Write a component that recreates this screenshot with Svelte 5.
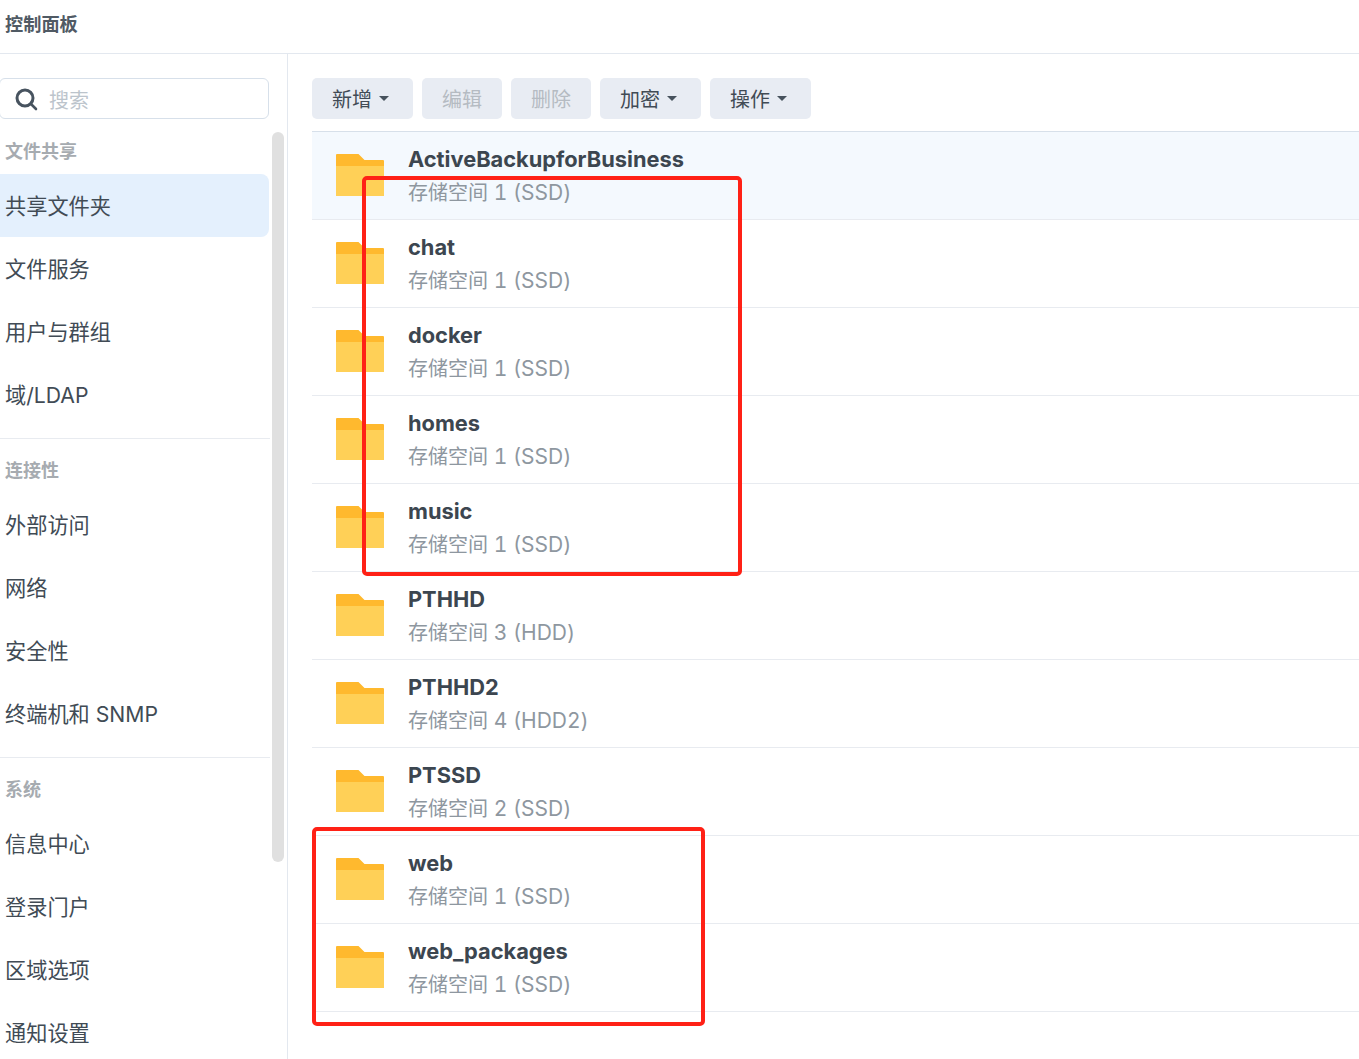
<script>
  const nav = [
    { title: '文件共享', items: ['共享文件夹', '文件服务', '用户与群组', '域/LDAP'] },
    { title: '连接性', items: ['外部访问', '网络', '安全性', '终端机和 SNMP'] },
    { title: '系统', items: ['信息中心', '登录门户', '区域选项', '通知设置'] }
  ];
  const buttons = [
    { label: '新增', menu: true },
    { label: '编辑', disabled: true },
    { label: '删除', disabled: true },
    { label: '加密', menu: true },
    { label: '操作', menu: true }
  ];
  const folders = [
    ['ActiveBackupforBusiness', '1 (SSD)'],
    ['chat', '1 (SSD)'],
    ['docker', '1 (SSD)'],
    ['homes', '1 (SSD)'],
    ['music', '1 (SSD)'],
    ['PTHHD', '3 (HDD)'],
    ['PTHHD2', '4 (HDD2)'],
    ['PTSSD', '2 (SSD)'],
    ['web', '1 (SSD)'],
    ['web_packages', '1 (SSD)']
  ];
</script>

<div class="page">
  <header class="title">控制面板</header>
  <div class="body">
    <aside class="sidebar">
      <div class="search">
        <svg width="24" height="24" viewBox="0 0 24 24">
          <circle cx="11" cy="11" r="8" fill="none" stroke="#47535f" stroke-width="3" />
          <path d="M17 17l5 5" stroke="#47535f" stroke-width="2.600" stroke-linecap="round" />
        </svg>
        <span>搜索</span>
      </div>
      <div class="scrollbar"></div>
      {#each nav as group, g}
        {#if g > 0}<div class="divider"></div>{/if}
        <div class="group-title" class:first={g === 0}>{group.title}</div>
        {#each group.items as item}
          <div class="nav-item" class:first={g === 0} class:active={item === '共享文件夹'}>{item}</div>
        {/each}
      {/each}
    </aside>

    <main class="content">
      <div class="toolbar">
        {#each buttons as b}
          <button class:disabled={b.disabled} class:menu={b.menu}>
            {b.label}
            {#if b.menu}<i class="caret"></i>{/if}
          </button>
        {/each}
      </div>
      <div class="list">
        {#each folders as f, i}
          <div class="row" class:selected={i === 0}>
            <svg class="folder" width="48" height="42" viewBox="0 0 48 42">
              <path d="M1 0h21.500l6 6h18.500a1 1 0 0 1 1 1v34a1 1 0 0 1-1 1h-46a1 1 0 0 1-1-1v-40a1 1 0 0 1 1-1z" fill="#ffb92e" />
              <path d="M0 12h48v29a1 1 0 0 1-1 1h-46a1 1 0 0 1-1-1z" fill="#ffd057" />
            </svg>
            <div class="info">
              <div class="name">{f[0]}</div>
              <div class="sub">存储空间 <span class="volume">{f[1]}</span></div>
            </div>
          </div>
        {/each}
      </div>
    </main>
  </div>
  <div class="mark mark-top"></div>
  <div class="mark mark-bottom"></div>
</div>

<style>
  :global(body) {
    margin: 0;
    background: #fff;
  }

  .page {
    position: relative;
    height: 1059px;
    overflow: hidden;
    font-family: Inter, "Noto Sans CJK SC", sans-serif;
    color: #414b55;
  }

  .title {
    height: 53px;
    border-bottom: 1px solid #e3e8ef;
    padding-left: 5px;
    font-size: 18.200px;
    font-weight: 700;
    line-height: 48px;
    color: #505a64;
  }

  .body {
    display: flex;
    height: 1005px;
  }

  .sidebar {
    position: relative;
    width: 287px;
    flex: none;
    border-right: 1px solid #e3e8ef;
    padding-top: 24px;
  }

  .search {
    display: flex;
    align-items: center;
    gap: 11px;
    width: 270px;
    height: 41px;
    box-sizing: border-box;
    margin-left: -1px;
    padding-left: 14px;
    border: 1px solid #d7e0ea;
    border-radius: 6px;
    font-size: 20px;
    color: #bcc4cc;
  }

  .search span {
    margin-top: 1px;
  }

  .scrollbar {
    position: absolute;
    left: 272px;
    top: 78px;
    width: 12px;
    height: 730px;
    border-radius: 6px;
    background: #e0e0e0;
  }

  .group-title {
    width: 269px;
    height: 55px;
    box-sizing: border-box;
    padding-left: 5px;
    font-size: 18px;
    font-weight: 700;
    line-height: 63px;
    color: #a6abb0;
  }

  .group-title.first {
    line-height: 65px;
  }

  .divider {
    width: 270px;
    height: 1px;
    margin-top: 11.500px;
    background: #e8ebf0;
  }

  .nav-item {
    width: 269px;
    height: 63px;
    padding-left: 5px;
    box-sizing: border-box;
    border-radius: 0 8px 8px 0;
    font-size: 21.200px;
    line-height: 62px;
  }

  .nav-item.first {
    line-height: 64px;
  }

  .nav-item.active {
    background: #e4f0fd;
  }

  .content {
    flex: 1;
    min-width: 0;
    padding: 24px 0 0 24px;
  }

  .toolbar {
    display: flex;
    gap: 9px;
    height: 41px;
    margin-bottom: 12px;
  }

  button {
    display: flex;
    align-items: center;
    justify-content: center;
    gap: 7px;
    height: 41px;
    padding: 0 20px;
    border: 0;
    border-radius: 5px;
    background: #e8ecf3;
    font: inherit;
    font-size: 20px;
    color: #414b55;
  }

  button.menu {
    padding-right: 24px;
  }

  button.disabled {
    color: #b5bbc2;
  }

  .caret {
    width: 0;
    height: 0;
    border-left: 5px solid transparent;
    border-right: 5px solid transparent;
    border-top: 5px solid #47525d;
  }

  .list {
    border-top: 1px solid #d7e0ea;
  }

  .row {
    display: flex;
    align-items: center;
    height: 88px;
    box-sizing: border-box;
    padding-left: 24px;
    border-bottom: 1px solid #e8ebf0;
  }

  .row.selected {
    background: #f4f9fe;
  }

  .folder {
    flex: none;
    margin-top: -2px;
  }

  .info {
    margin-left: 24px;
    margin-top: 1px;
  }

  .name {
    height: 33px;
    font-size: 21.800px;
    font-weight: 700;
    line-height: 34px;
    color: #3c4650;
  }

  .sub {
    margin-top: 1px;
    font-size: 20px;
    line-height: 33px;
    color: #8e979f;
  }

  .volume {
    font-size: 21px;
    font-variant-numeric: tabular-nums;
  }

  .mark {
    position: absolute;
    box-sizing: border-box;
    border: 4px solid #ff2116;
    border-radius: 5px;
  }

  .mark-top {
    left: 362px;
    top: 176px;
    width: 380px;
    height: 400px;
  }

  .mark-bottom {
    left: 312px;
    top: 827px;
    width: 393px;
    height: 199px;
  }
</style>
